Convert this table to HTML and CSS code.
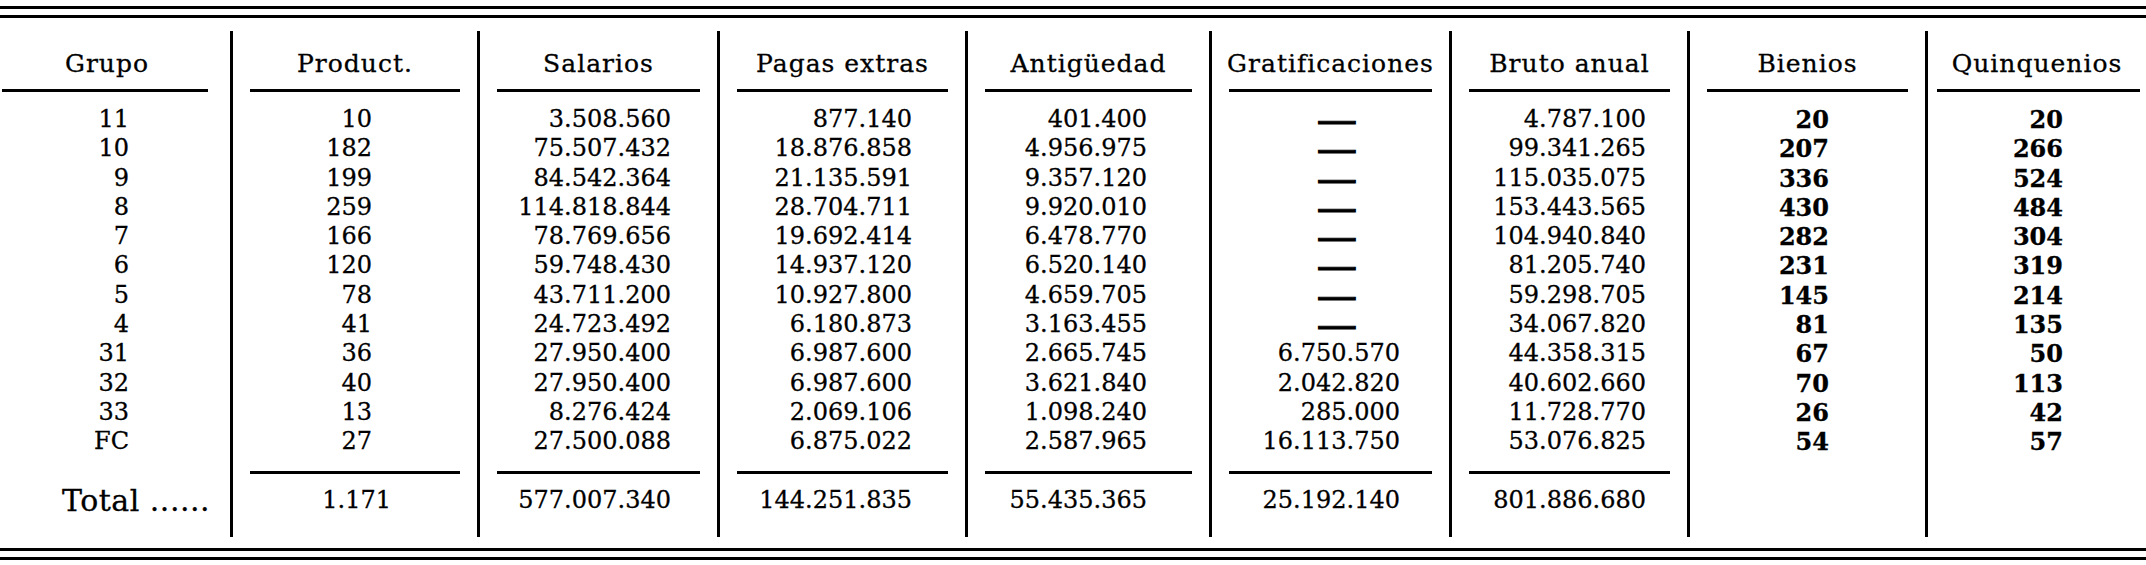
FILE: index.html
```html
<!DOCTYPE html>
<html lang="es">
<head>
<meta charset="utf-8">
<title>Tabla de retribuciones por grupo</title>
<link rel="stylesheet" href="styles.css">
</head>
<body>
<div class="dbl top"></div>
<div class="tbl">
  <div class="col c-grupo">
    <div class="hd">Grupo</div>
    <div class="ul"></div>
    <div class="v">11</div><div class="v">10</div><div class="v">9</div><div class="v">8</div>
    <div class="v">7</div><div class="v">6</div><div class="v">5</div><div class="v">4</div>
    <div class="v">31</div><div class="v">32</div><div class="v">33</div><div class="v">FC</div>
    <div class="sep none"></div>
    <div class="tot label">Total ......</div>
  </div>
  <div class="col c-prod">
    <div class="hd">Product.</div>
    <div class="ul"></div>
    <div class="v">10</div><div class="v">182</div><div class="v">199</div><div class="v">259</div>
    <div class="v">166</div><div class="v">120</div><div class="v">78</div><div class="v">41</div>
    <div class="v">36</div><div class="v">40</div><div class="v">13</div><div class="v">27</div>
    <div class="sep"></div>
    <div class="tot">1.171</div>
  </div>
  <div class="col c-sal">
    <div class="hd">Salarios</div>
    <div class="ul"></div>
    <div class="v">3.508.560</div><div class="v">75.507.432</div><div class="v">84.542.364</div><div class="v">114.818.844</div>
    <div class="v">78.769.656</div><div class="v">59.748.430</div><div class="v">43.711.200</div><div class="v">24.723.492</div>
    <div class="v">27.950.400</div><div class="v">27.950.400</div><div class="v">8.276.424</div><div class="v">27.500.088</div>
    <div class="sep"></div>
    <div class="tot">577.007.340</div>
  </div>
  <div class="col c-pag">
    <div class="hd">Pagas extras</div>
    <div class="ul"></div>
    <div class="v">877.140</div><div class="v">18.876.858</div><div class="v">21.135.591</div><div class="v">28.704.711</div>
    <div class="v">19.692.414</div><div class="v">14.937.120</div><div class="v">10.927.800</div><div class="v">6.180.873</div>
    <div class="v">6.987.600</div><div class="v">6.987.600</div><div class="v">2.069.106</div><div class="v">6.875.022</div>
    <div class="sep"></div>
    <div class="tot">144.251.835</div>
  </div>
  <div class="col c-ant">
    <div class="hd">Antigüedad</div>
    <div class="ul"></div>
    <div class="v">401.400</div><div class="v">4.956.975</div><div class="v">9.357.120</div><div class="v">9.920.010</div>
    <div class="v">6.478.770</div><div class="v">6.520.140</div><div class="v">4.659.705</div><div class="v">3.163.455</div>
    <div class="v">2.665.745</div><div class="v">3.621.840</div><div class="v">1.098.240</div><div class="v">2.587.965</div>
    <div class="sep"></div>
    <div class="tot">55.435.365</div>
  </div>
  <div class="col c-grat">
    <div class="hd">Gratificaciones</div>
    <div class="ul"></div>
    <div class="v dash"><span>—</span></div><div class="v dash"><span>—</span></div>
    <div class="v dash"><span>—</span></div><div class="v dash"><span>—</span></div>
    <div class="v dash"><span>—</span></div><div class="v dash"><span>—</span></div>
    <div class="v dash"><span>—</span></div><div class="v dash"><span>—</span></div>
    <div class="v">6.750.570</div><div class="v">2.042.820</div><div class="v">285.000</div><div class="v">16.113.750</div>
    <div class="sep"></div>
    <div class="tot">25.192.140</div>
  </div>
  <div class="col c-bruto">
    <div class="hd">Bruto anual</div>
    <div class="ul"></div>
    <div class="v">4.787.100</div><div class="v">99.341.265</div><div class="v">115.035.075</div><div class="v">153.443.565</div>
    <div class="v">104.940.840</div><div class="v">81.205.740</div><div class="v">59.298.705</div><div class="v">34.067.820</div>
    <div class="v">44.358.315</div><div class="v">40.602.660</div><div class="v">11.728.770</div><div class="v">53.076.825</div>
    <div class="sep"></div>
    <div class="tot">801.886.680</div>
  </div>
  <div class="col c-bien">
    <div class="hd">Bienios</div>
    <div class="ul"></div>
    <div class="v">20</div><div class="v">207</div><div class="v">336</div><div class="v">430</div>
    <div class="v">282</div><div class="v">231</div><div class="v">145</div><div class="v">81</div>
    <div class="v">67</div><div class="v">70</div><div class="v">26</div><div class="v">54</div>
    <div class="sep none"></div>
    <div class="tot"></div>
  </div>
  <div class="col c-quin">
    <div class="hd">Quinquenios</div>
    <div class="ul"></div>
    <div class="v">20</div><div class="v">266</div><div class="v">524</div><div class="v">484</div>
    <div class="v">304</div><div class="v">319</div><div class="v">214</div><div class="v">135</div>
    <div class="v">50</div><div class="v">113</div><div class="v">42</div><div class="v">57</div>
    <div class="sep none"></div>
    <div class="tot"></div>
  </div>
</div>
<div class="dbl bottom"></div>
</body>
</html>
```

FILE: styles.css
```css
html, body {
  margin: 0;
  padding: 0;
  background: #fff;
}
body {
  color: #000;
  font-family: "DejaVu Serif", "Liberation Serif", serif;
  font-size: 24px;
  width: 2146px;
  overflow: hidden;
  -webkit-text-stroke: 0.3px #000;
}
.dbl {
  height: 6px;
  border-top: 3px solid #000;
  border-bottom: 3px solid #000;
}
.dbl.top { margin-top: 6px; }
.dbl.bottom { margin-top: 11px; }

.tbl {
  display: grid;
  grid-template-columns: 230px 247px 240px 248px 244px 240px 238px 238px 1fr;
  margin-top: 13px;
}
.col {
  display: flex;
  flex-direction: column;
  border-left: 3px solid #000;
  padding-top: 18px;
  padding-bottom: 22px;
  --pr: 50px;
  --ml: 17px;
  --mr: 17px;
}
.hd {
  height: 29px;
  line-height: 29px;
  font-size: 25px;
  text-align: center;
  letter-spacing: 1px;
  white-space: nowrap;
}
.ul {
  border-top: 3px solid #000;
  margin: 11px var(--mr) 13px var(--ml);
}
.v {
  height: 29.3px;
  line-height: 29.3px;
  text-align: right;
  white-space: nowrap;
  padding-right: var(--pr);
}
.sep {
  margin: 14px var(--mr) 0 var(--ml);
  border-top: 3px solid #000;
}
.sep.none { border-top-color: transparent; }
.tot {
  margin-top: 12.7px;
  height: 29px;
  line-height: 29px;
  text-align: right;
  white-space: nowrap;
  padding-right: var(--pr);
}
.tot.label {
  font-size: 30px;
  letter-spacing: 0.5px;
  text-align: left;
  padding-left: 62px;
  padding-right: 0;
}
.v.dash {
  text-align: center;
  padding-right: 0;
  padding-left: 13px;
  font-weight: bold;
}
.v.dash span {
  display: inline-block;
  transform: translateY(1px) scaleX(1.7);
  -webkit-text-stroke: 0.9px #000;
}

.c-grupo { border-left: none; --pr: 101px; --ml: 2px; --mr: 22px; }
.c-grupo .hd { padding-right: 16px; }
.c-prod { --pr: 105px; }
.c-prod .tot { padding-right: 86px; }
.c-sal { --pr: 46px; }
.c-pag { --pr: 53px; }
.c-ant { --pr: 62px; }
.c-grat { --pr: 49px; }
.c-bruto { --pr: 41px; }
.c-bien { --pr: 96px; }
.c-quin { --pr: 83px; --ml: 9px; --mr: 6px; }
.c-bien .v, .c-quin .v { font-weight: bold; }
```
